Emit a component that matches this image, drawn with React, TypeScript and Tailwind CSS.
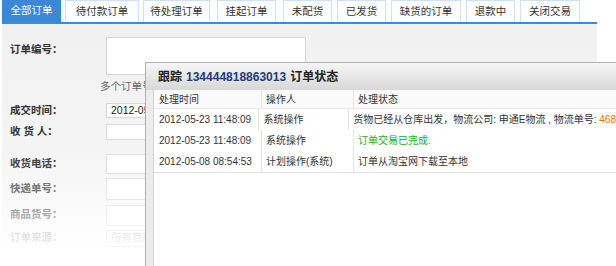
import React from "react";

const tabs = [
  { label: "全部订单", w: "w-[59px]", ml: "ml-[2px]", active: true },
  { label: "待付款订单", w: "w-[74px]", ml: "ml-[4px]" },
  { label: "待处理订单", w: "w-[67px]", ml: "ml-[4px]" },
  { label: "挂起订单", w: "w-[59px]", ml: "ml-[7px]" },
  { label: "未配货", w: "w-[49px]", ml: "ml-[7px]" },
  { label: "已发货", w: "w-[49px]", ml: "ml-[5px]" },
  { label: "缺货的订单", w: "w-[70px]", ml: "ml-[5px]" },
  { label: "退款中", w: "w-[49px]", ml: "ml-[5px]" },
  { label: "关闭交易", w: "w-[60px]", ml: "ml-[5px]" },
];

const rows = [
  {
    time: "2012-05-23 11:48:09",
    who: "系统操作",
    status: (
      <>
        货物已经从仓库出发，物流公司: 申通E物流 , 物流单号: <span className="text-[#e07800]">468</span>
      </>
    ),
  },
  {
    time: "2012-05-23 11:48:09",
    who: "系统操作",
    status: <span className="text-[#20b020]">订单交易已完成.</span>,
  },
  { time: "2012-05-08 08:54:53", who: "计划操作(系统)", status: "订单从淘宝网下载至本地" },
];

function Field({ label, color, border, h, mt, children }: { label: string; color: string; border: string; h: string; mt: string; children?: React.ReactNode }) {
  return (
    <div className={`flex items-center ${mt}`}>
      <div className={`w-[96px] font-bold ${color}`}>{label}</div>
      <div className={`w-[200px] ${h} bg-white border ${border} flex items-center px-1`}>{children}</div>
    </div>
  );
}

export default function App() {
  return (
    <div
      className="relative w-[616px] h-[266px] overflow-hidden bg-white text-[10.5px] text-[#333]"
      style={{ fontFamily: '"Liberation Sans", "Noto Sans CJK SC", sans-serif' }}
    >
      {/* tabs */}
      <div className="flex h-[22px] w-[597px]">
        {tabs.map((t) => (
          <div
            key={t.label}
            className={`${t.w} ${t.ml} flex items-center justify-center ${
              t.active ? "bg-[#3b88d6] text-white" : "bg-white border border-b-0 border-[#cfe2f4] text-[#333]"
            }`}
          >
            {t.label}
          </div>
        ))}
      </div>
      <div className="ml-[2px] w-[595px] h-[2px] bg-[#3f8ad6]" />

      {/* form */}
      <div className="ml-[2px] w-[595px] h-[242px] bg-gradient-to-b from-[#f1f1f1] via-[#f4f4f4] to-white pl-[8px] pt-[13px] relative">
        <div className="flex">
          <div className="w-[96px] font-bold text-[#333] pt-[5px]">订单编号：</div>
          <div className="w-[200px] h-[38px] bg-white border border-[#d6d6d6]" />
        </div>
        <div className="ml-[90px] mt-[4px] text-[#666]">多个订单号用逗号隔开</div>
        <Field label="成交时间：" color="text-[#333]" border="border-[#d6d6d6]" h="h-[15px]" mt="mt-[8px]">
          <span className="text-[#222]">2012-05-01</span>
        </Field>
        <Field label="收 货 人：" color="text-[#333]" border="border-[#dadada]" h="h-[16px]" mt="mt-[5px]" />
        <Field label="收货电话：" color="text-[#444]" border="border-[#e0e0e0]" h="h-[20px]" mt="mt-[14px]" />
        <Field label="快递单号：" color="text-[#777]" border="border-[#e6e6e6]" h="h-[22px]" mt="mt-[4px]" />
        <Field label="商品货号：" color="text-[#999]" border="border-[#ececec]" h="h-[21px]" mt="mt-[5px]" />
        <Field label="订单来源：" color="text-[#bbb]" border="border-[#d8e6f2]" h="h-[17px]" mt="mt-[4px]">
          <span className="text-[#ccc]">所有商店</span>
        </Field>
        <div className="absolute left-0 right-0 bottom-0 h-[60px] bg-gradient-to-b from-transparent via-white/60 to-white" />
      </div>

      {/* popup */}
      <div className="absolute left-[145px] top-[62px] right-0 bottom-0 border-l border-t border-[#b0b0b0] bg-[#ececec] flex flex-col">
        <div className="h-[27px] shrink-0 bg-gradient-to-b from-[#f6f6f6] to-[#d8d8d8] flex items-center pl-[12px] text-[12px] font-bold text-[#222] whitespace-nowrap">
          跟踪 <span className="text-[#1c3d7a] mx-[4px]">134444818863013</span> 订单状态
        </div>
        <div className="flex-1 ml-[7px] bg-white border-l border-[#d4d4d4] overflow-hidden text-[10px]">
          <div className="border-b border-[#e2e2e2]">
            <div className="flex h-[19px] items-center bg-[#fafafa] border-b border-[#e8e8e8] whitespace-nowrap">
              <div className="w-[108px] pl-[5px] border-r border-[#e4e4e4] h-full flex items-center">处理时间</div>
              <div className="w-[92px] pl-[4px] border-r border-[#e4e4e4] h-full flex items-center">操作人</div>
              <div className="flex-1 pl-[4px]">处理状态</div>
            </div>
            {rows.map((r, i) => (
              <div key={i} className="flex h-[21px] items-center whitespace-nowrap">
                <div className="w-[108px] pl-[5px] border-r border-[#e4e4e4] h-full flex items-center text-[#333]">{r.time}</div>
                <div className="w-[92px] pl-[4px] border-r border-[#e4e4e4] h-full flex items-center text-[#333]">{r.who}</div>
                <div className="flex-1 pl-[4px] text-[#333]">{r.status}</div>
              </div>
            ))}
          </div>
        </div>
      </div>
    </div>
  );
}
